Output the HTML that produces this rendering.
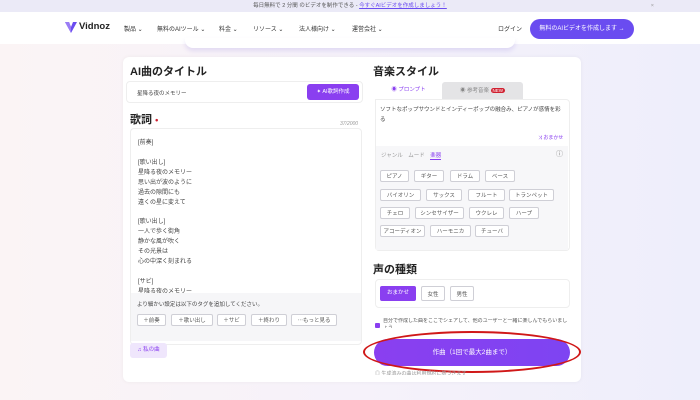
<!DOCTYPE html>
<html><head><meta charset="utf-8"><style>
*{margin:0;padding:0;box-sizing:border-box}
body{width:700px;height:400px;overflow:hidden;font-family:"Liberation Sans","Noto Sans CJK JP",sans-serif;background:linear-gradient(90deg,#fbf4f5 0%,#f6f2fa 50%,#eeeefb 100%);position:relative;color:#333}
.a{position:absolute}
.chip{position:absolute;height:12px;border:1px solid #cfcfd6;border-radius:2px;font-size:5.5px;color:#555;display:flex;align-items:center;justify-content:center;background:#fff}
.ly{position:absolute;left:138px;font-size:6px;color:#444}
</style></head><body>
<div class="a" style="left:0;top:0;width:700px;height:12px;background:#ebeaf7;font-size:5.5px;color:#555;text-align:center;line-height:12px">毎日無料で 2 分間 のビデオを制作できる - <span style="color:#6a4cf0;text-decoration:underline">今すぐAIビデオを作成しましょう！</span><span style="position:absolute;right:46px;color:#999">×</span></div>
<div class="a" style="left:0;top:12px;width:700px;height:32px;background:#fff"></div>
<div class="a" style="left:185px;top:38px;width:330px;height:10px;background:#fff;border-radius:0 0 8px 8px;box-shadow:0 3px 5px rgba(140,120,220,.2)"></div>
<svg class="a" style="left:64px;top:20px" width="14" height="14" viewBox="0 0 14 14"><path d="M1 2 L7 13 L13 2 L9 2 L7 7 L5 2Z" fill="#6a4cf0"/><path d="M1 2 L5 2 L7 7 L7 13Z" fill="#9a7cf5"/></svg>
<div class="a" style="left:79px;top:21px;font-size:9.5px;font-weight:bold;color:#222">Vidnoz</div>
<div class="a" style="left:124px;top:24px;font-size:6px;color:#333;word-spacing:0">製品 ⌄</div>
<div class="a" style="left:157px;top:24px;font-size:6px;color:#333">無料のAIツール ⌄</div>
<div class="a" style="left:219px;top:24px;font-size:6px;color:#333">料金 ⌄</div>
<div class="a" style="left:253px;top:24px;font-size:6px;color:#333">リソース ⌄</div>
<div class="a" style="left:299px;top:24px;font-size:6px;color:#333">法人様向け ⌄</div>
<div class="a" style="left:352px;top:24px;font-size:6px;color:#333">運営会社 ⌄</div>
<div class="a" style="left:498px;top:24px;font-size:6px;color:#333">ログイン</div>
<div class="a" style="left:530px;top:19px;width:104px;height:20px;border-radius:10px;background:#6a4cf0;color:#fff;font-size:6px;line-height:20px;text-align:center">無料のAIビデオを作成します →</div>

<div class="a" style="left:123px;top:57px;width:458px;height:325px;background:#fff;border-radius:6px;box-shadow:0 0 4px rgba(0,0,0,.05)"></div>
<div class="a" style="left:130px;top:63px;font-size:11px;font-weight:bold;color:#222">AI曲のタイトル</div>
<div class="a" style="left:126px;top:81px;width:237px;height:22px;border:1px solid #eee;border-radius:4px"></div>
<div class="a" style="left:137px;top:89px;font-size:5.5px;color:#444">星降る夜のメモリー</div>
<div class="a" style="left:307px;top:84px;width:52px;height:16px;background:#8a3ff0;border-radius:3px;color:#fff;font-size:5.5px;line-height:16px;text-align:center">✦ AI歌詞作成</div>
<div class="a" style="left:130px;top:111px;font-size:11px;font-weight:bold;color:#222">歌詞 <span style="color:#d02030;font-size:9px">•</span></div>
<div class="a" style="left:340px;top:121px;font-size:5px;color:#999;font-style:italic">37/2000</div>
<div class="a" style="left:130px;top:128px;width:232px;height:217px;border:1px solid #eee;border-radius:4px"></div>
<div class="ly" style="top:137px">[前奏]</div>
<div class="ly" style="top:157px">[歌い出し]</div>
<div class="ly" style="top:167px">星降る夜のメモリー</div>
<div class="ly" style="top:177px">思い出が波のように</div>
<div class="ly" style="top:187px">過去の隙間にも</div>
<div class="ly" style="top:197px">遠くの星に変えて</div>
<div class="ly" style="top:216px">[歌い出し]</div>
<div class="ly" style="top:226px">一人で歩く街角</div>
<div class="ly" style="top:236px">静かな風が吹く</div>
<div class="ly" style="top:246px">その光景は</div>
<div class="ly" style="top:256px">心の中深く刻まれる</div>
<div class="ly" style="top:276px">[サビ]</div>
<div class="ly" style="top:286px;height:7px;overflow:hidden">星降る夜のメモリー</div>
<div class="a" style="left:131px;top:293px;width:230px;height:48px;background:#f6f6f8"></div>
<div class="a" style="left:137px;top:300px;font-size:5.5px;color:#444">より細かい設定は以下のタグを追加してください。</div>
<div class="chip" style="left:137px;top:314px;width:29px">＋前奏</div>
<div class="chip" style="left:171px;top:314px;width:42px">＋歌い出し</div>
<div class="chip" style="left:217px;top:314px;width:29px">＋サビ</div>
<div class="chip" style="left:251px;top:314px;width:36px">＋終わり</div>
<div class="chip" style="left:291px;top:314px;width:46px">⋯もっと見る</div>
<div class="a" style="left:130px;top:343px;width:37px;height:15px;background:#efe6fc;border-radius:3px;font-size:5.5px;color:#8a3ff0;line-height:15px;text-align:center">♫ 私の曲</div>

<div class="a" style="left:373px;top:63px;font-size:11px;font-weight:bold;color:#222">音楽スタイル</div>
<div class="a" style="left:442px;top:82px;width:81px;height:17px;background:#e4e4e6;border-radius:3px 3px 0 0;font-size:5.5px;color:#888;line-height:17px;text-align:center">◉ 参考音楽 <span style="background:#d02030;color:#fff;border-radius:4px;padding:0 2px;font-size:4.5px">NEW</span></div>
<div class="a" style="left:375px;top:82px;width:67px;height:17px;background:#fff;border-radius:3px 3px 0 0;font-size:5.5px;color:#8a3ff0;line-height:17px;text-align:center">◉ プロンプト</div>
<div class="a" style="left:375px;top:99px;width:195px;height:152px;border:1px solid #eee;border-radius:0 4px 4px 4px"></div>
<div class="a" style="left:380px;top:105px;width:186px;font-size:5.5px;color:#444;line-height:10px">ソフトなポップサウンドとインディーポップの融合み、ピアノが感情を彩る</div>
<div class="a" style="left:538px;top:134px;font-size:5px;color:#8a3ff0">⤨ おまかせ</div>
<div class="a" style="left:376px;top:146px;width:192px;height:104px;background:#f7f7f9"></div>
<div class="a" style="left:381px;top:151px;font-size:5.5px;color:#999">ジャンル　ムード　<span style="color:#8a3ff0;border-bottom:1px solid #8a3ff0">楽器</span></div>
<div class="a" style="left:556px;top:149px;font-size:7px;color:#888">ⓘ</div>
<div class="chip" style="left:380px;top:170px;width:29px">ピアノ</div>
<div class="chip" style="left:414px;top:170px;width:30px">ギター</div>
<div class="chip" style="left:450px;top:170px;width:30px">ドラム</div>
<div class="chip" style="left:485px;top:170px;width:30px">ベース</div>
<div class="chip" style="left:380px;top:189px;width:41px">バイオリン</div>
<div class="chip" style="left:426px;top:189px;width:36px">サックス</div>
<div class="chip" style="left:468px;top:189px;width:37px">フルート</div>
<div class="chip" style="left:509px;top:189px;width:45px">トランペット</div>
<div class="chip" style="left:380px;top:207px;width:30px">チェロ</div>
<div class="chip" style="left:415px;top:207px;width:49px">シンセサイザー</div>
<div class="chip" style="left:469px;top:207px;width:35px">ウクレレ</div>
<div class="chip" style="left:509px;top:207px;width:30px">ハープ</div>
<div class="chip" style="left:380px;top:225px;width:45px">アコーディオン</div>
<div class="chip" style="left:430px;top:225px;width:41px">ハーモニカ</div>
<div class="chip" style="left:475px;top:225px;width:34px">チューバ</div>
<div class="a" style="left:373px;top:261px;font-size:11px;font-weight:bold;color:#222">声の種類</div>
<div class="a" style="left:375px;top:279px;width:195px;height:29px;border:1px solid #eee;border-radius:4px"></div>
<div class="a" style="left:380px;top:286px;width:36px;height:15px;background:#8a3ff0;border-radius:2px;color:#fff;font-size:5.5px;line-height:15px;text-align:center">おまかせ</div>
<div class="chip" style="left:421px;top:286px;width:24px;height:15px">女性</div>
<div class="chip" style="left:450px;top:286px;width:24px;height:15px">男性</div>
<div class="a" style="left:375px;top:323px;width:5px;height:5px;background:#8a3ff0;border-radius:1px"></div>
<div class="a" style="left:383px;top:318px;width:185px;height:10px;overflow:hidden;font-size:5px;color:#555;line-height:7px">自分で作成した曲をここでシェアして、他のユーザーと一緒に楽しんでもらいましょう</div>
<div class="a" style="left:374px;top:339px;width:196px;height:27px;border-radius:14px;background:linear-gradient(90deg,#8a3ff0,#7e44f2);color:#fff;font-size:6.5px;line-height:27px;text-align:center">作曲（1回で最大2曲まで）</div>
<div class="a" style="left:363px;top:331px;width:218px;height:42px;border:2.5px solid #d01818;border-radius:50%"></div>
<div class="a" style="left:375px;top:370px;font-size:5px;color:#999;white-space:nowrap;height:5px;overflow:hidden">◎ 生成済みの曲は利用規約に基づきます</div>
</body></html>
